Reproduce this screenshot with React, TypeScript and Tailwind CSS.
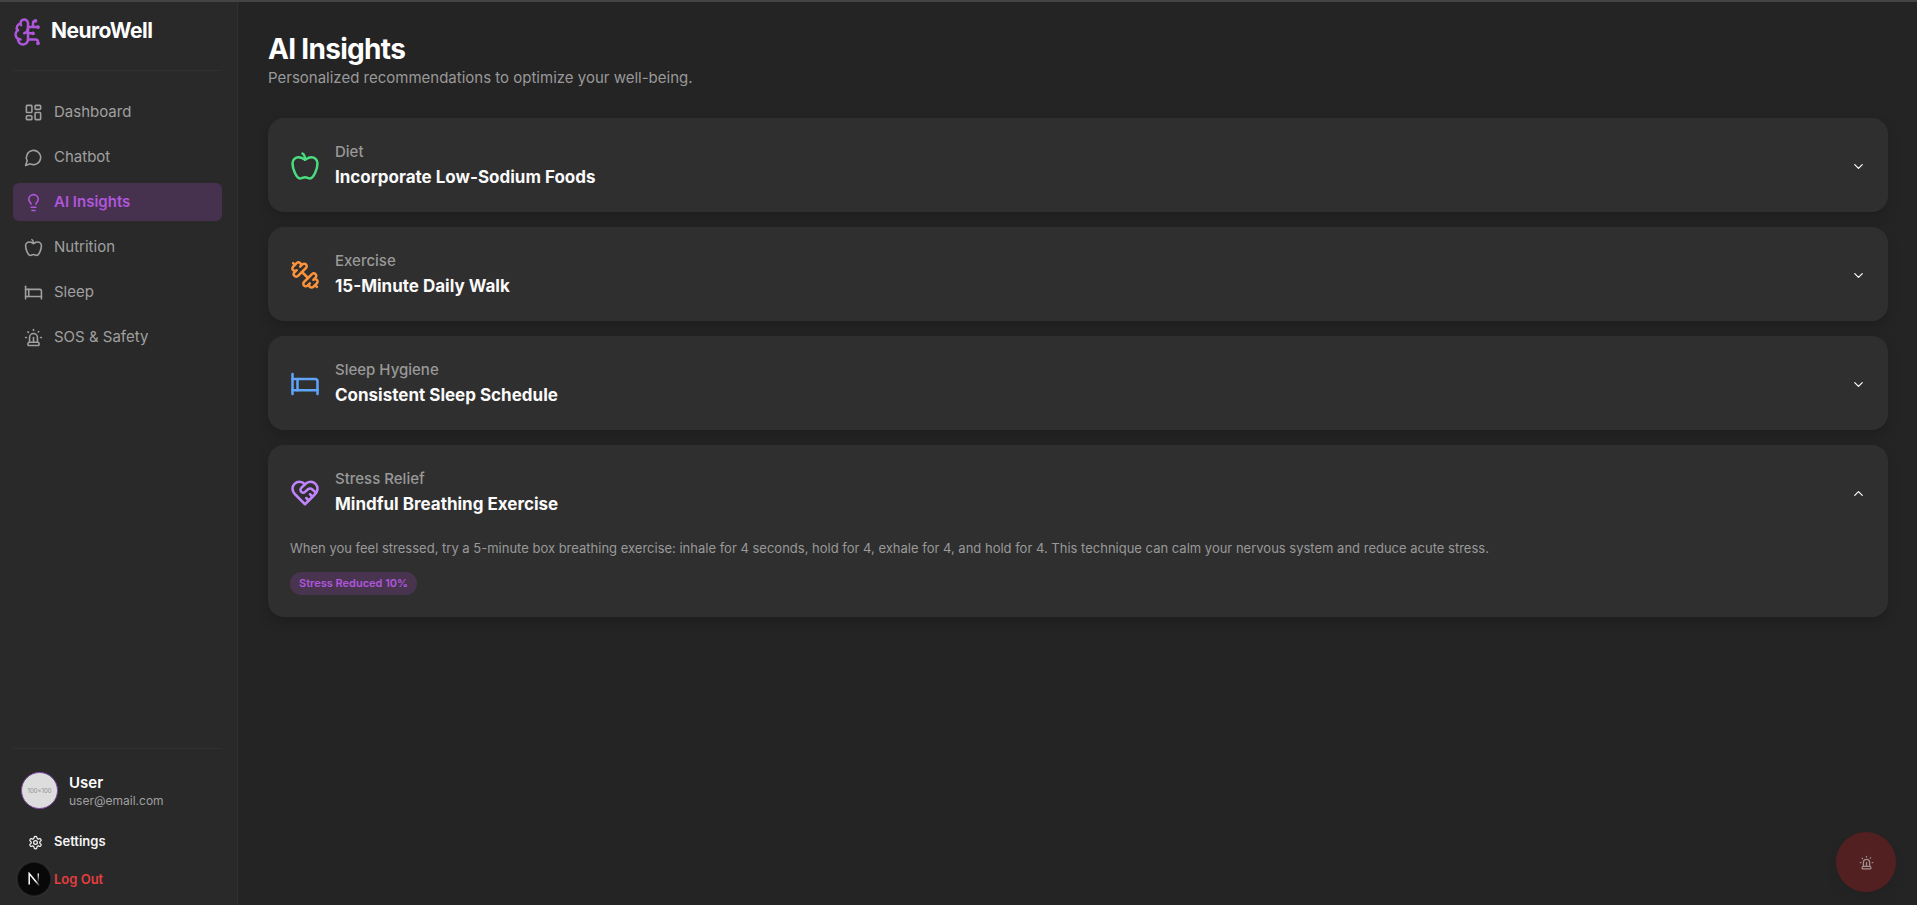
import { useState, type ReactNode } from "react";
import { Bed, BrainCircuit, ChevronDown, LayoutDashboard, Lightbulb, Siren } from "lucide-react";

type IconProps = { size?: number; className?: string };
type IconComponent = (props: IconProps) => ReactNode;

function StrokeIcon({ size = 24, className, children }: IconProps & { children: ReactNode }) {
  return (
    <svg
      width={size}
      height={size}
      viewBox="0 0 24 24"
      fill="none"
      stroke="currentColor"
      strokeWidth="2"
      strokeLinecap="round"
      strokeLinejoin="round"
      className={className}
      aria-hidden="true"
    >
      {children}
    </svg>
  );
}

const AppleIcon: IconComponent = (props) => (
  <StrokeIcon {...props}>
    <path d="M12 20.94c1.5 0 2.75 1.06 4 1.06 3 0 6-8 6-12.22A4.91 4.91 0 0 0 17 5c-2.22 0-4 1.44-5 2-1-.56-2.78-2-5-2a4.9 4.9 0 0 0-5 4.78C2 14 5 22 8 22c1.25 0 2.5-1.06 4-1.06Z" />
    <path d="M10 2c1 .5 2 2 2 5" />
  </StrokeIcon>
);

const DumbbellIcon: IconComponent = (props) => (
  <StrokeIcon {...props}>
    <path d="M14.4 14.4 9.6 9.6" />
    <path d="M18.657 21.485a2 2 0 1 1-2.829-2.828l-1.767 1.768a2 2 0 1 1-2.829-2.829l6.364-6.364a2 2 0 1 1 2.829 2.829l-1.768 1.767a2 2 0 1 1 2.828 2.829z" />
    <path d="m21.5 21.5-1.4-1.4" />
    <path d="M3.9 3.9 2.5 2.5" />
    <path d="M6.404 12.768a2 2 0 1 1-2.829-2.829l1.768-1.767a2 2 0 1 1-2.828-2.829l2.828-2.828a2 2 0 1 1 2.829 2.828l1.767-1.768a2 2 0 1 1 2.829 2.829z" />
  </StrokeIcon>
);

const HeartHandshakeIcon: IconComponent = (props) => (
  <StrokeIcon {...props}>
    <path d="M19 14c1.49-1.46 3-3.21 3-5.5A5.5 5.5 0 0 0 16.5 3c-1.76 0-3 .5-4.5 2-1.5-1.5-2.74-2-4.5-2A5.5 5.5 0 0 0 2 8.5c0 2.3 1.5 4.05 3 5.5l7 7Z" />
    <path d="M12 5 9.04 7.96a2.17 2.17 0 0 0 0 3.08c.82.82 2.13.85 3 .07l2.07-1.9a2.82 2.82 0 0 1 3.79 0l2.96 2.66" />
    <path d="m18 15-2-2" />
    <path d="m15 18-2-2" />
  </StrokeIcon>
);

const MessageIcon: IconComponent = (props) => (
  <StrokeIcon {...props}>
    <path d="M7.9 20A9 9 0 1 0 4 16.1L2 22Z" />
  </StrokeIcon>
);

const SettingsIcon: IconComponent = (props) => (
  <StrokeIcon {...props}>
    <path d="M12.22 2h-.44a2 2 0 0 0-2 2v.18a2 2 0 0 1-1 1.73l-.43.25a2 2 0 0 1-2 0l-.15-.08a2 2 0 0 0-2.73.73l-.22.38a2 2 0 0 0 .73 2.73l.15.1a2 2 0 0 1 1 1.72v.51a2 2 0 0 1-1 1.74l-.15.09a2 2 0 0 0-.73 2.73l.22.38a2 2 0 0 0 2.73.73l.15-.08a2 2 0 0 1 2 0l.43.25a2 2 0 0 1 1 1.73V20a2 2 0 0 0 2 2h.44a2 2 0 0 0 2-2v-.18a2 2 0 0 1 1-1.73l.43-.25a2 2 0 0 1 2 0l.15.08a2 2 0 0 0 2.73-.73l.22-.39a2 2 0 0 0-.73-2.73l-.15-.08a2 2 0 0 1-1-1.74v-.5a2 2 0 0 1 1-1.74l.15-.09a2 2 0 0 0 .73-2.73l-.22-.38a2 2 0 0 0-2.73-.73l-.15.08a2 2 0 0 1-2 0l-.43-.25a2 2 0 0 1-1-1.73V4a2 2 0 0 0-2-2z" />
    <circle cx="12" cy="12" r="3" />
  </StrokeIcon>
);

const BedIcon: IconComponent = (props) => <Bed {...props} />;
const DashboardIcon: IconComponent = (props) => <LayoutDashboard {...props} />;
const BulbIcon: IconComponent = (props) => <Lightbulb {...props} />;
const SirenIcon: IconComponent = (props) => <Siren {...props} />;

type NavItem = { label: string; icon: IconComponent; active?: boolean };

const navItems: NavItem[] = [
  { label: "Dashboard", icon: DashboardIcon },
  { label: "Chatbot", icon: MessageIcon },
  { label: "AI Insights", icon: BulbIcon, active: true },
  { label: "Nutrition", icon: AppleIcon },
  { label: "Sleep", icon: BedIcon },
  { label: "SOS & Safety", icon: SirenIcon },
];

type Insight = {
  id: string;
  category: string;
  title: string;
  icon: IconComponent;
  color: string;
  body?: string;
  badge?: string;
};

const insights: Insight[] = [
  { id: "diet", category: "Diet", title: "Incorporate Low-Sodium Foods", icon: AppleIcon, color: "text-[#4ade80]" },
  { id: "exercise", category: "Exercise", title: "15-Minute Daily Walk", icon: DumbbellIcon, color: "text-[#fb923c]" },
  { id: "sleep", category: "Sleep Hygiene", title: "Consistent Sleep Schedule", icon: BedIcon, color: "text-[#60a5fa]" },
  {
    id: "stress",
    category: "Stress Relief",
    title: "Mindful Breathing Exercise",
    icon: HeartHandshakeIcon,
    color: "text-[#c084fc]",
    body: "When you feel stressed, try a 5-minute box breathing exercise: inhale for 4 seconds, hold for 4, exhale for 4, and hold for 4. This technique can calm your nervous system and reduce acute stress.",
    badge: "Stress Reduced 10%",
  },
];

function Sidebar() {
  return (
    <aside className="flex w-[238px] shrink-0 flex-col border-r border-[#303030] bg-[#292929] pr-[15px] pl-[13px]">
      <div className="flex h-[69px] items-start gap-2 border-b border-[#303030] pt-[15px]">
        <BrainCircuit size={30} className="shrink-0 text-[#af57db]" />
        <span className="text-[21px] leading-7 font-bold tracking-tight text-white">NeuroWell</span>
      </div>
      <nav className="flex flex-col gap-[7px] pt-[22px]">
        {navItems.map(({ label, icon: Icon, active }) => (
          <a
            key={label}
            href="#"
            aria-current={active ? "page" : undefined}
            className={
              active
                ? "flex h-[38px] items-center gap-[11px] rounded-md bg-[#46314e] px-[11px] text-[15px] font-semibold text-[#af57db]"
                : "flex h-[38px] items-center gap-[11px] rounded-md px-[11px] text-[15px] text-[#a0a0a0]"
            }
          >
            <Icon size={19} className="shrink-0" />
            {label}
          </a>
        ))}
      </nav>
      <div className="mt-auto border-t border-[#303030] pt-[23px] pb-[6px]">
        <div className="flex items-center gap-[11px] px-2">
          <div className="flex size-[37px] items-center justify-center rounded-full border border-[#7f48a0] bg-[#dddddd] text-[6px] whitespace-nowrap text-[#8c8c8c]">
            100×100
          </div>
          <div>
            <p className="text-[15px] leading-5 font-semibold text-white">User</p>
            <p className="text-[12px] leading-4 text-[#a0a0a0]">user@email.com</p>
          </div>
        </div>
        <div className="flex flex-col pt-[14px]">
          <button
            type="button"
            className="flex h-[38px] items-center gap-[11px] px-[15px] text-[13px] font-semibold text-[#f5f5f5]"
          >
            <SettingsIcon size={15} className="shrink-0" />
            Settings
          </button>
          <button
            type="button"
            className="flex h-[38px] items-center px-[41px] text-[13px] font-semibold text-[#e53e3e]"
          >
            Log Out
          </button>
        </div>
      </div>
    </aside>
  );
}

function InsightCard({ insight, open, onToggle }: { insight: Insight; open: boolean; onToggle: () => void }) {
  const Icon = insight.icon;
  return (
    <section className="rounded-2xl bg-[#2f2f2f] shadow-[0_5px_12px_rgba(0,0,0,0.18)]">
      <h2>
        <button
          type="button"
          aria-expanded={open}
          onClick={onToggle}
          className="flex w-full items-center gap-[15px] px-[22px] pt-[23px] pb-[21px] text-left"
        >
          <Icon size={30} className={`shrink-0 ${insight.color}`} />
          <span className="flex grow flex-col">
            <span className="text-[15px] leading-[22px] font-medium text-[#999999]">{insight.category}</span>
            <span className="text-[17px] leading-7 font-bold text-[#fafafa]">{insight.title}</span>
          </span>
          <ChevronDown size={15} className={open ? "shrink-0 rotate-180 text-[#fafafa]" : "shrink-0 text-[#fafafa]"} />
        </button>
      </h2>
      {open && insight.body && (
        <div className="flex flex-col items-start gap-[15px] px-[22px] pb-[22px]">
          <p className="text-[13px] leading-[18px] text-[#999999]">{insight.body}</p>
          <span className="flex h-[23px] items-center rounded-full bg-[#493450] px-[9px] text-[11px] font-semibold text-[#af57db]">
            {insight.badge}
          </span>
        </div>
      )}
    </section>
  );
}

export default function App() {
  const [openId, setOpenId] = useState<string | null>("stress");
  return (
    <div className="flex min-h-screen border-t-2 border-[#444444] bg-[#242424] font-['Inter',sans-serif]">
      <Sidebar />
      <main className="min-w-0 grow py-[29px] pr-[29px] pl-[30px]">
        <h1 className="text-[28px] leading-9 font-bold tracking-tight text-white">AI Insights</h1>
        <p className="text-[15px] leading-[22px] text-[#999999]">
          Personalized recommendations to optimize your well-being.
        </p>
        <div className="flex flex-col gap-[15px] pt-[29px]">
          {insights.map((insight) => (
            <InsightCard
              key={insight.id}
              insight={insight}
              open={openId === insight.id}
              onToggle={() => setOpenId(openId === insight.id ? null : insight.id)}
            />
          ))}
        </div>
      </main>
      <button
        type="button"
        aria-label="Emergency SOS"
        className="fixed right-[21px] bottom-[13px] flex size-[60px] items-center justify-center rounded-full bg-[#522020] text-[#a09090] shadow-[0_8px_12px_rgba(0,0,0,0.08)]"
      >
        <SirenIcon size={15} />
      </button>
      <button
        type="button"
        aria-label="Open developer tools"
        className="fixed bottom-[10px] left-[18px] flex size-8 items-center justify-center rounded-full bg-[#080808] shadow-[0_0_0_1px_#1c1c1c,0_0_0_2px_#303030]"
      >
        <svg viewBox="0 0 14 14" className="size-[14px]" fill="none">
          <defs>
            <linearGradient id="nStem" x1="0" y1="0" x2="0" y2="1">
              <stop offset="0" stopColor="#fff" />
              <stop offset="1" stopColor="#fff" stopOpacity="0" />
            </linearGradient>
            <linearGradient id="nDiagonal" gradientUnits="userSpaceOnUse" x1="7" y1="7" x2="12.5" y2="13.5">
              <stop offset="0.3" stopColor="#fff" />
              <stop offset="1" stopColor="#fff" stopOpacity="0.1" />
            </linearGradient>
          </defs>
          <path d="M2.2 12.5V1.5L12.4 13.8" stroke="url(#nDiagonal)" strokeWidth="1.5" />
          <rect x="10.6" y="1.5" width="1.4" height="9" fill="url(#nStem)" />
        </svg>
      </button>
    </div>
  );
}
